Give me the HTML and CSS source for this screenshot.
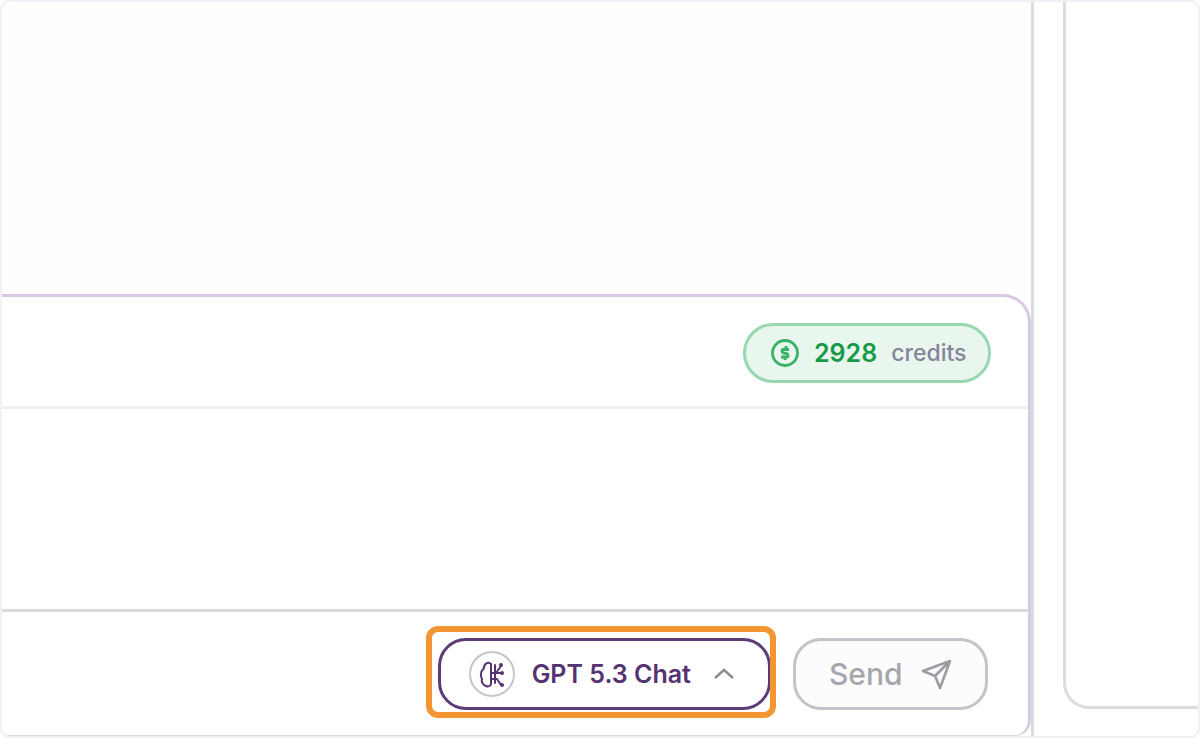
FILE: index.html
```html
<!DOCTYPE html>
<html lang="en">
<head>
    <meta charset="UTF-8">
    <meta name="viewport" content="width=device-width, initial-scale=1.0">
    <title>Chat</title>
    <link rel="stylesheet" href="styles.css">
</head>
<body>

    <div class="frame">
        <!-- Chat column -->
        <main class="chat">
            <div class="messages"></div>

            <form class="composer">
                <div class="composer-header">
                    <div class="credits">
                        <svg class="coin-icon" viewBox="0 0 30 30" fill="none" stroke="currentColor">
                            <circle cx="15" cy="15" r="12.500" stroke-width="2.800"/>
                            <path d="M19 11.500h-5.500c-2 0-2 3 0 3.500l3 .5c2 .5 2 3.500 0 3.500H11M16 8v4M15 19v3" stroke-width="3"/>
                        </svg>
                        <span class="credits-count">2928</span>
                        <span class="credits-label">credits</span>
                    </div>
                </div>

                <textarea class="composer-input" aria-label="Message"></textarea>

                <div class="composer-footer">
                    <div class="model-picker">
                        <button type="button" class="model-button">
                            <span class="model-avatar">
                                <svg viewBox="0 0 28 28" fill="none" stroke="currentColor" stroke-width="2" stroke-linecap="round" stroke-linejoin="round">
                                    <path d="M13 4C10 1 6 4 6 8c-3 3-4 7-2 11-1 3 1 6 4 7 2 1 5 0 5-2z"/>
                                    <path d="M13 13h5l5-7M17 5v18M17 13h6M13 19h6l4 6"/>
                                    <circle cx="23" cy="5" r="1"/>
                                    <circle cx="24" cy="13" r="1"/>
                                    <circle cx="24" cy="25" r="1"/>
                                </svg>
                            </span>
                            <span class="model-name">GPT 5.3 Chat</span>
                            <svg class="chevron-icon" viewBox="0 0 20 12" fill="none" stroke="currentColor" stroke-width="2.500">
                                <path d="M1 10l9-8 9 8"/>
                            </svg>
                        </button>
                        <div class="highlight"></div>
                    </div>
                    <button type="submit" class="send-button" disabled>
                        Send
                        <svg class="send-icon" viewBox="0 0 32 32" fill="none" stroke="currentColor" stroke-width="2.600" stroke-linejoin="round">
                            <path d="M30 3L3 13l12 5 5 12zM30 3L15 18"/>
                        </svg>
                    </button>
                </div>
            </form>
        </main>

        <!-- Side panel -->
        <aside class="side-panel"></aside>
    </div>

</body>
</html>
```

FILE: styles.css
```css
* {
    box-sizing: border-box;
}
body {
    margin: 0;
    background-color: white;
    font-family: Inter, "Liberation Sans", sans-serif;
}
button, textarea {
    font-family: inherit;
}
.frame {
    display: flex;
    gap: 29px;
    min-height: 100vh;
    border: 2px solid #f1f0f7;
    border-radius: 10px;
    overflow: hidden;
}
.chat {
    flex: 1;
    display: flex;
    flex-direction: column;
    border-right: 3px solid #dcdcdc;
    background-color: #fefefe;
}
.messages {
    flex: 1;
}
.composer {
    border: 3px solid #d8c8e3;
    border-left: none;
    border-bottom: 1px solid #e2d6ea;
    border-radius: 0 28px 16px 0;
    background-color: white;
}
.composer-header {
    display: flex;
    justify-content: flex-end;
    padding: 26px 37px 23px;
    border-bottom: 3px solid #efefef;
}
.credits {
    display: flex;
    align-items: center;
    height: 60px;
    padding: 0 22px 0 24px;
    border: 3px solid #98d8b0;
    border-radius: 30px;
    background-color: #e9f6ee;
}
.coin-icon {
    width: 30px;
    height: 30px;
    margin-right: 14px;
    color: #37b266;
}
.credits-count {
    margin-right: 14px;
    color: #169a48;
    font-size: 25px;
    font-weight: 600;
}
.credits-label {
    color: #85849a;
    font-size: 23px;
    font-weight: 500;
}
.composer-input {
    display: block;
    width: 100%;
    height: 200px;
    padding: 24px;
    border: none;
    outline: none;
    resize: none;
    background: none;
    font-size: 25px;
}
.composer-footer {
    display: flex;
    justify-content: flex-end;
    gap: 22px;
    padding: 26px 40px 25px;
    border-top: 3px solid #dbdbdb;
}
.model-picker {
    position: relative;
}
.model-button, .send-button {
    display: flex;
    align-items: center;
    height: 72px;
    border-radius: 28px;
}
.model-button {
    padding: 0 34px 0 28px;
    border: 3px solid #5b3c74;
    background-color: white;
    color: #543370;
    font-size: 25px;
    font-weight: 600;
}
.model-avatar {
    display: flex;
    align-items: center;
    justify-content: center;
    width: 46px;
    height: 46px;
    margin-right: 17px;
    border: 2px solid #c5c6cc;
    border-radius: 50%;
}
.model-avatar svg {
    width: 28px;
    height: 28px;
}
.chevron-icon {
    width: 20px;
    height: 12px;
    margin-left: 23px;
    color: #8c8f96;
}
/* orange callout around the model button */
.highlight {
    position: absolute;
    inset: -12px -5px -8px -12px;
    border: 6px solid #f39530;
    border-radius: 12px;
    pointer-events: none;
}
.send-button {
    padding: 0 33px;
    border: 3px solid #c3c4c9;
    background-color: #fcfcfc;
    color: #a6a7ae;
    font-size: 30px;
    font-weight: 500;
}
.send-icon {
    width: 32px;
    height: 32px;
    margin-left: 18px;
    color: #9b9ca4;
}
.side-panel {
    width: 12%;
    margin-bottom: 27px;
    margin-right: -9px;
    border: 3px solid #dcdcdc;
    border-top: none;
    border-right: none;
    border-radius: 0 0 0 26px;
}
```
